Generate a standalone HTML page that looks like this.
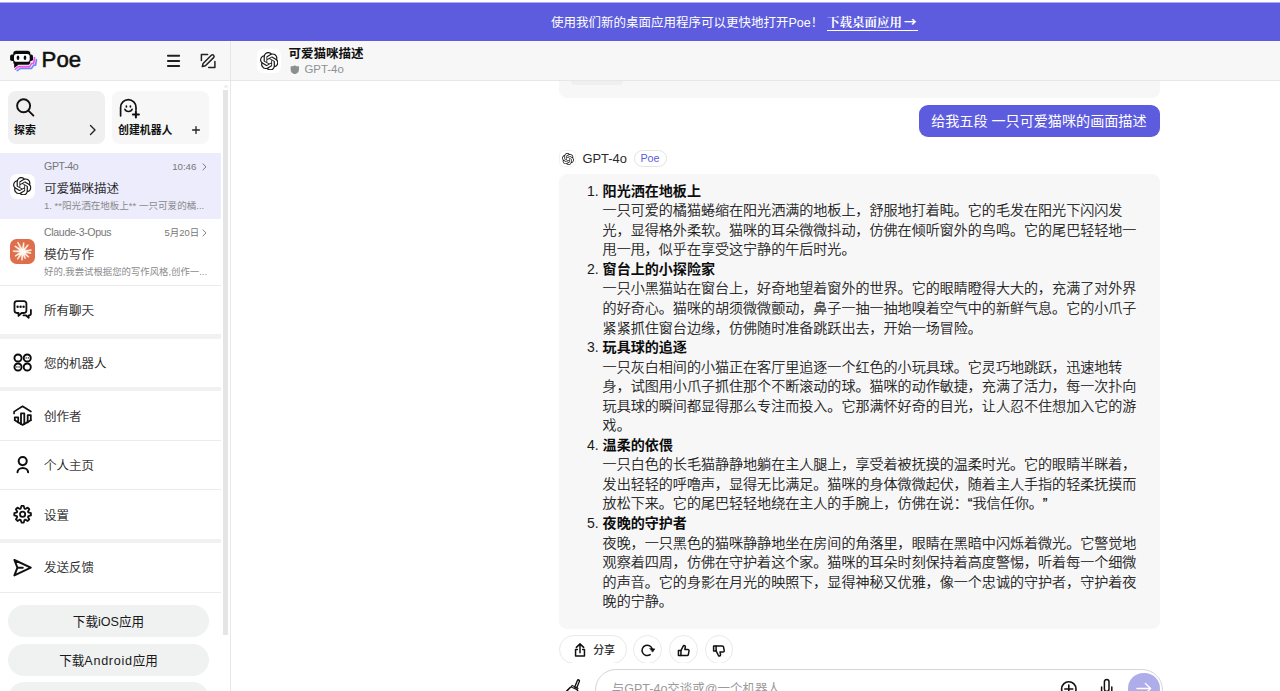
<!DOCTYPE html>
<html lang="zh-CN">
<head>
<meta charset="utf-8">
<title>Poe</title>
<style>
*{box-sizing:border-box;margin:0;padding:0}
html,body{width:1280px;height:691px;overflow:hidden;background:#fff}
body{font-family:"Liberation Sans","Noto Sans CJK SC",sans-serif;color:#141414;position:relative;-webkit-font-smoothing:antialiased}
.abs{position:absolute}
svg{display:block}
/* banner */
#banner{position:absolute;left:0;top:2px;width:1280px;height:40px;background:#5d5cde;border-top:1px solid #aeadee;border-bottom:1px solid #908fe8;color:#fff;font-size:12.5px;line-height:41.5px;white-space:nowrap}
#banner .t1{position:absolute;left:551px;top:-1px;line-height:43.5px}
#banner .t2{position:absolute;left:827px;top:-1px;line-height:40px;font-family:"Liberation Serif","Noto Serif CJK SC",serif;font-weight:700;font-size:12.5px}
#banner .ul{position:absolute;left:827px;top:27px;width:91px;height:1px;background:#fff}
#banner .ar{font-family:"Noto Sans CJK SC",sans-serif;font-weight:700;margin-left:2px}
/* headers */
#shead{position:absolute;left:0;top:41px;width:230px;height:39px;background:#f7f7f7}
#mhead{position:absolute;left:231px;top:41px;width:1049px;height:39px;background:#f7f7f7}
#hline{position:absolute;left:0;top:80px;width:1280px;height:1px;background:#e6e8e8}
#vline{position:absolute;left:230px;top:41px;width:1px;height:650px;background:#e6e8e8}
.poe{position:absolute;left:41.6px;top:6px;font-size:22.2px;line-height:26px;font-weight:400;color:#111;-webkit-text-stroke:0.55px #111;letter-spacing:0}
/* sidebar */
#side{position:absolute;left:0;top:81px;width:230px;height:610px;background:#fff;overflow:hidden}
.card{position:absolute;top:10px;width:97px;height:53px;border-radius:8px}
.card .lbl{position:absolute;left:6px;top:31px;font-size:10.9px;line-height:16px;font-weight:700;color:#111;white-space:nowrap}
.chat{position:absolute;left:0;width:221px;height:66px}
.chat .bot{position:absolute;left:44px;top:7px;letter-spacing:-0.35px;font-size:10.6px;line-height:13px;color:#777}
.chat .time{position:absolute;right:24.6px;top:7px;font-size:9.7px;line-height:13px;color:#777}
.chat .ttl{position:absolute;left:44px;top:27px;font-size:12.5px;line-height:19px;color:#111;white-space:nowrap;font-weight:300;-webkit-text-stroke:0.2px #111}
.chat .pre{position:absolute;left:44px;top:46px;font-size:9.55px;line-height:14px;color:#8a8a8a;white-space:nowrap}
.chat .av{position:absolute;left:10.2px;top:20.8px;width:25px;height:25px;border-radius:6.5px;overflow:hidden}
.nav{position:absolute;left:0;width:221px;height:48px}
.nav .lbl{position:absolute;left:44px;top:15.7px;font-size:12.5px;line-height:18px;color:#111;white-space:nowrap;font-weight:300;-webkit-text-stroke:0.2px #111}
.nav .ic{position:absolute;left:11px;top:13px;width:22px;height:22px}
.band{position:absolute;left:0;width:221px;height:4.7px;background:#f0f1f1}
.thin{position:absolute;left:0;width:221px;height:1px;background:#ececec}
.pill{position:absolute;left:8px;width:201px;height:32.3px;border-radius:17px;background:#f0f1f1;font-size:12.6px;line-height:34.4px;text-align:center;color:#1a1a1a}
#thumb{position:absolute;left:222.8px;top:9px;width:5.6px;height:545px;background:#e3e5e6}
/* main */
#main{position:absolute;left:231px;top:81px;width:1049px;height:610px;background:#fff;overflow:hidden}

#mhead .av{position:absolute;left:25.8px;top:7.7px;width:24.5px;height:24.5px;border-radius:6px;background:#fff}
#mhead .ttl{position:absolute;left:57.5px;top:4.8px;font-size:12.5px;line-height:16px;font-weight:700;color:#111;white-space:nowrap}
#mhead .sub{position:absolute;left:73.5px;top:20.5px;font-size:11.4px;line-height:15px;color:#8b9195;white-space:nowrap}
.prevb{position:absolute;left:328px;top:0;width:601px;height:17px;background:#f7f7f7;border-radius:0 0 8px 8px}
.prevb i{position:absolute;left:12px;top:0;width:52px;height:4px;background:#efefef;border-radius:0 0 4px 4px}
.userb{position:absolute;left:687.6px;top:23.7px;width:241.2px;height:32px;border-radius:9px;background:#5d5cde;color:#fff;font-size:14.1px;line-height:32px;padding-left:12.6px;white-space:nowrap}
.bhead{position:absolute;left:328px;top:69px;height:18px}
.bhead .sav{position:absolute;left:0.9px;top:0.9px;width:15.4px;height:15.4px;border-radius:4px;background:#fff;box-shadow:0 0 0 0.8px #eeefef}
.bhead .nm{position:absolute;left:23.5px;top:0;font-size:12.9px;line-height:17.5px;color:#2a2a2a;white-space:nowrap}
.bhead .tag{position:absolute;left:74.5px;top:0;width:33px;height:16.6px;border:1px solid #e3e3e3;border-radius:8.5px;background:#fff;color:#5d5cde;font-size:10.8px;line-height:14.6px;text-align:center}
.botb{position:absolute;left:328px;top:93.3px;width:601px;height:455.2px;border-radius:8px;background:#f7f7f7}
.botb .txt{position:absolute;left:43.6px;top:7.4px;font-size:14.06px;line-height:19.54px;color:#0d0d0d;white-space:nowrap;font-weight:300;-webkit-text-stroke:0.2px #0d0d0d}
.botb .txt b{font-weight:700;-webkit-text-stroke:0}
.botb .txt .n{position:absolute;left:-18px;width:14px;text-align:right;font-weight:400;-webkit-text-stroke:0;color:#1a1a1a}
.acts{position:absolute;left:0;top:554.2px;width:1049px;height:27.4px;overflow:hidden}
.acts .bt{position:absolute;top:0;height:28.6px;border:1px solid #e6eaea;border-radius:15px;background:#fff}
.acts .bt.c{width:28.6px}
.acts .sh{position:absolute;left:33px;top:6.3px;font-size:10.9px;line-height:16px;font-weight:400;color:#1a1a1a;-webkit-text-stroke:0.2px #1a1a1a}
.inp{position:absolute;left:364.3px;top:587.7px;width:568.2px;height:44px;border:1px solid #d3d6d6;border-radius:21px;background:#fff}
.inp .ph{position:absolute;left:15.5px;top:9px;font-size:12.5px;line-height:20px;color:#9a9a9a;white-space:nowrap}
.send{position:absolute;left:897.2px;top:591.9px;width:31.6px;height:31.6px;border-radius:50%;background:#aeade9}
</style>
</head>
<body>
<svg width="0" height="0" style="position:absolute"><defs><symbol id="oai" viewBox="0 0 24 24"><path fill="#1a1a1a" d="M22.2819 9.8211a5.9847 5.9847 0 0 0-.5157-4.9108 6.0462 6.0462 0 0 0-6.5098-2.9A6.0651 6.0651 0 0 0 4.9807 4.1818a5.9847 5.9847 0 0 0-3.9977 2.9 6.0462 6.0462 0 0 0 .7427 7.0966 5.98 5.98 0 0 0 .511 4.9107 6.051 6.051 0 0 0 6.5146 2.9001A5.9847 5.9847 0 0 0 13.2599 24a6.0557 6.0557 0 0 0 5.7718-4.2058 5.9894 5.9894 0 0 0 3.9977-2.9001 6.0557 6.0557 0 0 0-.7475-7.0729zm-9.022 12.6081a4.4755 4.4755 0 0 1-2.8764-1.0408l.1419-.0804 4.7783-2.7582a.7948.7948 0 0 0 .3927-.6813v-6.7369l2.02 1.1686a.071.071 0 0 1 .038.052v5.5826a4.504 4.504 0 0 1-4.4945 4.4944zm-9.6607-4.1254a4.4708 4.4708 0 0 1-.5346-3.0137l.142.0852 4.783 2.7582a.7712.7712 0 0 0 .7806 0l5.8428-3.3685v2.3324a.0804.0804 0 0 1-.0332.0615L9.74 19.9502a4.4992 4.4992 0 0 1-6.1408-1.6464zM2.3408 7.8956a4.485 4.485 0 0 1 2.3655-1.9728V11.6a.7664.7664 0 0 0 .3879.6765l5.8144 3.3543-2.0201 1.1685a.0757.0757 0 0 1-.071 0l-4.8303-2.7865A4.504 4.504 0 0 1 2.3408 7.872zm16.5963 3.8558L13.1038 8.364 15.1192 7.2a.0757.0757 0 0 1 .071 0l4.8303 2.7913a4.4944 4.4944 0 0 1-.6765 8.1042v-5.6772a.79.79 0 0 0-.407-.667zm2.0107-3.0231l-.142-.0852-4.7735-2.7818a.7759.7759 0 0 0-.7854 0L9.409 9.2297V6.8974a.0662.0662 0 0 1 .0284-.0615l4.8303-2.7866a4.4992 4.4992 0 0 1 6.6802 4.66zM8.3065 12.863l-2.02-1.1638a.0804.0804 0 0 1-.038-.0567V6.0742a4.4992 4.4992 0 0 1 7.3757-3.4537l-.142.0805L8.704 5.459a.7948.7948 0 0 0-.3927.6813zm1.0976-2.3654l2.602-1.4998 2.6069 1.4998v2.9994l-2.5974 1.4997-2.6067-1.4997Z"/></symbol></defs></svg>
<div id="banner">
  <span class="t1">使用我们新的桌面应用程序可以更快地打开Poe！</span>
  <span class="t2">下载桌面应用<span class="ar">→</span></span>
  <span class="ul"></span>
</div>
<div id="shead">
  <svg class="abs" style="left:0;top:0" width="60" height="40" viewBox="0 41 60 40">
    <path d="M17.2 70.6 L20.4 68.4 H31.4 L33.6 65.2 H35.6 L36.4 59.6" fill="none" stroke="#7585ff" stroke-width="1.7" stroke-linejoin="round" stroke-linecap="round"/>
    <path d="M15.4 69.2 L18.7 66.6 H29.6 L31.7 63.4 H33.7 L34.5 57.6" fill="none" stroke="#f253e9" stroke-width="1.7" stroke-linejoin="round" stroke-linecap="round"/>
    <path d="M14.2 63 V67.9 L18.6 64.7 Z" fill="#0b0b0b"/>
    <rect x="10.1" y="54.5" width="22.9" height="6.6" rx="1.8" fill="#0b0b0b"/>
    <rect x="13.3" y="50.8" width="17" height="13.9" rx="2.8" fill="#0b0b0b"/>
    <rect x="14" y="53.9" width="15.7" height="7.9" rx="2.6" fill="#fff"/>
    <ellipse cx="18" cy="57.8" rx="1.35" ry="2.3" fill="#0b0b0b"/>
    <ellipse cx="25" cy="57.8" rx="1.35" ry="2.3" fill="#0b0b0b"/>
  </svg>
  <div class="poe">Poe</div>
  <svg class="abs" style="left:155px;top:0" width="75" height="40" viewBox="155 41 75 40" fill="none" stroke="#222" stroke-width="1.9" stroke-linecap="round" stroke-linejoin="round">
    <path d="M167.9 55.8 H179.2 M167.9 61 H179.2 M167.9 66 H179.2"/>
    <g stroke-width="1.5">
      <path d="M207.6 54.4 H201.4 V60.6"/>
      <path d="M214.9 61.4 V67.6 H208.7"/>
      <path d="M211.3 55.3 a1.6 1.6 0 0 1 2.3 2.3 L205.4 65.8 L202.3 66.6 L203.1 63.5 Z"/>
    </g>
  </svg>
</div>
<div id="mhead">
  <div class="av"><svg class="abs" style="left:3px;top:3px" width="18.5" height="18.5"><use href="#oai"/></svg></div>
  <div class="ttl">可爱猫咪描述</div>
  <svg class="abs" style="left:59px;top:24px" width="9.6" height="9.4" viewBox="0 0 10 10"><path d="M5 0.2 L6.6 1.2 L9.4 1.2 V5 C9.4 7.6 7.4 9.2 5 9.9 C2.6 9.2 0.6 7.6 0.6 5 V1.2 L3.4 1.2 Z" fill="#8a8f8f"/></svg>
  <div class="sub">GPT-4o</div>
</div>
<div id="side">
  <!-- cards -->
  <div class="card" style="left:8px;background:#f0f0f0">
    <svg class="abs" style="left:8px;top:7px" width="19" height="19" viewBox="0 0 19 19" fill="none" stroke="#111" stroke-width="1.9" stroke-linecap="round"><circle cx="7.6" cy="7.8" r="6.5"/><path d="M12.4 12.6 L17.4 17.6"/></svg>
    <div class="lbl">探索</div>
    <svg class="abs" style="left:81px;top:33px" width="8" height="12" viewBox="0 0 8 12" fill="none" stroke="#222" stroke-width="1.4" stroke-linecap="round" stroke-linejoin="round"><path d="M1.5 1.5 L6 6 L1.5 10.5"/></svg>
  </div>
  <div class="card" style="left:112px;background:#f7f7f7">
    <svg class="abs" style="left:7px;top:6px" width="22" height="22" viewBox="0 0 22 22" fill="none" stroke="#111" stroke-width="1.5" stroke-linecap="round" stroke-linejoin="round">
      <path d="M1.6 18.8 V10.4 a7.7 7.7 0 0 1 15.4 0 V13" stroke-width="1.7"/>
      <path d="M5.9 12.2 a3.7 2.9 0 0 0 7.2 0" stroke-width="1.5"/>
      <path d="M7.4 9 V9.8 M11.4 9 V9.8" stroke-width="1.7"/>
      <path d="M16.9 14.6 V20.6 M13.9 17.6 H19.9" stroke-width="2"/>
    </svg>
    <div class="lbl">创建机器人</div>
    <svg class="abs" style="left:79px;top:34px" width="10" height="10" viewBox="0 0 10 10" fill="none" stroke="#222" stroke-width="1.3" stroke-linecap="round"><path d="M5 1.6 V8.4 M1.6 5 H8.4"/></svg>
  </div>
  <!-- chats -->
  <div class="chat" style="top:72px;background:#ececfc">
    <div class="av" style="background:#fff"><svg class="abs" style="left:3px;top:3px" width="18.5" height="18.5"><use href="#oai"/></svg></div>
    <div class="bot">GPT-4o</div>
    <div class="time">10:46</div>
    <svg class="abs chev" style="left:201.7px;top:9.8px" width="5.3" height="7.8" viewBox="0 0 6 9" fill="none" stroke="#777" stroke-width="1.1" stroke-linecap="round" stroke-linejoin="round"><path d="M1 1 L4.6 4.5 L1 8"/></svg>
    <div class="ttl">可爱猫咪描述</div>
    <div class="pre">1. **阳光洒在地板上** 一只可爱的橘...</div>
  </div>
  <div class="chat" style="top:138px">
    <div class="av" style="background:#de6f4a;top:20px">
      <svg class="abs" style="left:0;top:0" width="25" height="25" viewBox="-12.7 -12.6 25 25"><path d="M0.84 -0.44 L-4.55 -9.61 L-5.35 -9.19 L-0.84 0.44Z M0.94 0.11 L1.49 -8.81 L0.59 -8.91 L-0.94 -0.11Z M0.74 0.60 L5.82 -6.49 L5.12 -7.05 L-0.74 -0.60Z M0.17 0.93 L8.68 -1.12 L8.52 -2.00 L-0.17 -0.93Z M-0.17 0.93 L8.26 2.00 L8.42 1.12 L0.17 -0.93Z M-0.64 0.70 L5.70 5.80 L6.30 5.14 L0.64 -0.70Z M-0.89 0.33 L2.18 7.19 L3.02 6.87 L0.89 -0.33Z M-0.95 -0.09 L-1.23 8.56 L-0.33 8.64 L0.95 0.09Z M-0.78 -0.54 L-5.57 7.30 L-4.83 7.82 L0.78 0.54Z M-0.48 -0.82 L-7.79 4.04 L-7.33 4.82 L0.48 0.82Z M0.05 -0.95 L-9.62 -0.97 L-9.66 -0.07 L-0.05 0.95Z M0.55 -0.78 L-7.54 -5.84 L-8.06 -5.10 L-0.55 0.78Z" fill="#fff3e8" stroke="#fff3e8" stroke-width="0.5" stroke-linejoin="round"/><circle r="2.7" cx="0.2" cy="0.2" fill="#fffaf4"/></svg>
    </div>
    <div class="bot">Claude-3-Opus</div>
    <div class="time" style="right:21.9px;font-size:9.45px">5月20日</div>
    <svg class="abs chev" style="left:201.7px;top:9.8px" width="5.3" height="7.8" viewBox="0 0 6 9" fill="none" stroke="#777" stroke-width="1.1" stroke-linecap="round" stroke-linejoin="round"><path d="M1 1 L4.6 4.5 L1 8"/></svg>
    <div class="ttl">模仿写作</div>
    <div class="pre" style="font-size:9.4px">好的,我尝试根据您的写作风格,创作一...</div>
  </div>
  <div class="thin" style="top:204px"></div>
  <!-- nav -->
  <div class="nav" style="top:205px">
    <svg class="ic" viewBox="0 0 22 22" fill="none" stroke="#111" stroke-width="1.8" stroke-linecap="round" stroke-linejoin="round">
      <path d="M5.9 2.1 H13 a2.4 2.4 0 0 1 2.4 2.4 V11.6 a2.4 2.4 0 0 1 -2.4 2.4 H10.6 L7.5 16.9 V14 H5.9 a2.4 2.4 0 0 1 -2.4 -2.4 V4.5 a2.4 2.4 0 0 1 2.4 -2.4 Z"/>
      <path d="M19.9 11 V14.5 a1.8 1.8 0 0 1 -1.8 1.8 H17.7 V18.8 L14.8 16.3 H12.4"/>
      <g fill="#111" stroke="none"><circle cx="6.6" cy="7.8" r="1.2"/><circle cx="9.6" cy="7.8" r="1.2"/><circle cx="12.6" cy="7.8" r="1.2"/></g>
    </svg>
    <div class="lbl">所有聊天</div>
  </div>
  <div class="band" style="top:253.2px"></div>
  <div class="nav" style="top:258px">
    <svg class="ic" viewBox="0 0 22 22" fill="none" stroke="#0a0a0a" stroke-width="1.9">
      <circle cx="7" cy="6" r="3.55"/><circle cx="16.25" cy="6" r="3.55"/><circle cx="7" cy="15" r="3.55"/><circle cx="16.25" cy="15" r="3.55"/>
      <path d="M15.1 5.9 H15.2 M17.3 5.9 H17.4 M5.85 14.9 H5.95 M8.05 14.9 H8.15" stroke-width="1.4" stroke-linecap="round"/>
    </svg>
    <div class="lbl">您的机器人</div>
  </div>
  <div class="band" style="top:305.8px"></div>
  <div class="nav" style="top:311px">
    <svg class="ic" viewBox="0 0 22 22" fill="none" stroke="#111" stroke-width="1.6" stroke-linejoin="round" stroke-linecap="round">
      <path d="M3.1 8.4 V6.6 L11.55 1.3 L19.9 6.5" stroke-width="1.7"/>
      <path d="M3.8 15.2 V12.3 H7.2 V17.4" stroke-width="1.8"/>
      <path d="M10 19.2 V8.3 H13.3 V19.2" stroke-width="1.8"/>
      <path d="M16.7 17.4 V10.2 H19.8 V15.2" stroke-width="1.8"/>
      <path d="M3.8 15.2 L11.65 19.9 L19.8 15.2" stroke-width="1.8"/>
    </svg>
    <div class="lbl">创作者</div>
  </div>
  <div class="thin" style="top:359px"></div>
  <div class="nav" style="top:360px">
    <svg class="ic" viewBox="0 0 22 22" fill="none" stroke="#0d0d0d" stroke-width="2" stroke-linecap="round">
      <circle cx="11.7" cy="7.1" r="4.05"/>
      <path d="M6.5 18.3 a5.3 4.4 0 0 1 10.6 0"/>
    </svg>
    <div class="lbl">个人主页</div>
  </div>
  <div class="thin" style="top:408.1px"></div>
  <div class="nav" style="top:409.5px">
    <svg class="ic" style="top:12.1px" viewBox="0 0 22 22" fill="none" stroke="#111" stroke-width="1.8" stroke-linejoin="round">
      <circle cx="11.6" cy="11.3" r="2.6"/>
      <path d="M10.48 2.97 L12.72 2.97 L13.45 5.59 L14.32 5.95 L16.70 4.62 L18.28 6.20 L16.95 8.58 L17.31 9.45 L19.93 10.18 L19.93 12.42 L17.31 13.15 L16.95 14.02 L18.28 16.40 L16.70 17.98 L14.32 16.65 L13.45 17.01 L12.72 19.63 L10.48 19.63 L9.75 17.01 L8.88 16.65 L6.50 17.98 L4.92 16.40 L6.25 14.02 L5.89 13.15 L3.27 12.42 L3.27 10.18 L5.89 9.45 L6.25 8.58 L4.92 6.20 L6.50 4.62 L8.88 5.95 L9.75 5.59 Z"/>
    </svg>
    <div class="lbl" style="top:16.6px">设置</div>
  </div>
  <div class="band" style="top:457.6px"></div>
  <div class="nav" style="top:462.5px">
    <svg class="ic" viewBox="0 0 22 22" fill="none" stroke="#111" stroke-width="1.95" stroke-linejoin="round" stroke-linecap="round">
      <path d="M3.4 3 L19.8 10.7 L3.4 18.4 L6.4 10.7 Z M6.4 10.7 H11.8"/>
    </svg>
    <div class="lbl">发送反馈</div>
  </div>
  <div class="thin" style="top:511px"></div>
  <div class="pill" style="top:523.8px">下载iOS应用</div>
  <div class="pill" style="top:562.8px">下载<span style="letter-spacing:0.7px">Android</span>应用</div>
  <div class="pill" style="top:601.4px"></div>
  <div id="thumb"></div>
  <svg class="abs" style="left:223px;top:3px" width="6" height="4" viewBox="0 0 6 4"><path d="M0.5 3.5 L3 0.5 L5.5 3.5 Z" fill="#e9eaea"/></svg>
</div>
<div id="main">
  <div class="prevb"><i></i></div>
  <div class="userb">给我五段 一只可爱猫咪的画面描述</div>
  <div class="bhead">
    <div class="sav"><svg class="abs" style="left:1.7px;top:1.7px" width="12" height="12"><use href="#oai"/></svg></div>
    <div class="nm">GPT-4o</div>
    <div class="tag">Poe</div>
  </div>
  <div class="botb">
    <div class="txt">
      <div><span class="n">1.</span><b>阳光洒在地板上</b></div>
      <div>一只可爱的橘猫蜷缩在阳光洒满的地板上，舒服地打着盹。它的毛发在阳光下闪闪发</div>
      <div>光，显得格外柔软。猫咪的耳朵微微抖动，仿佛在倾听窗外的鸟鸣。它的尾巴轻轻地一</div>
      <div>甩一甩，似乎在享受这宁静的午后时光。</div>
      <div><span class="n">2.</span><b>窗台上的小探险家</b></div>
      <div>一只小黑猫站在窗台上，好奇地望着窗外的世界。它的眼睛瞪得大大的，充满了对外界</div>
      <div>的好奇心。猫咪的胡须微微颤动，鼻子一抽一抽地嗅着空气中的新鲜气息。它的小爪子</div>
      <div>紧紧抓住窗台边缘，仿佛随时准备跳跃出去，开始一场冒险。</div>
      <div><span class="n">3.</span><b>玩具球的追逐</b></div>
      <div>一只灰白相间的小猫正在客厅里追逐一个红色的小玩具球。它灵巧地跳跃，迅速地转</div>
      <div>身，试图用小爪子抓住那个不断滚动的球。猫咪的动作敏捷，充满了活力，每一次扑向</div>
      <div>玩具球的瞬间都显得那么专注而投入。它那满怀好奇的目光，让人忍不住想加入它的游</div>
      <div>戏。</div>
      <div><span class="n">4.</span><b>温柔的依偎</b></div>
      <div>一只白色的长毛猫静静地躺在主人腿上，享受着被抚摸的温柔时光。它的眼睛半眯着，</div>
      <div>发出轻轻的呼噜声，显得无比满足。猫咪的身体微微起伏，随着主人手指的轻柔抚摸而</div>
      <div>放松下来。它的尾巴轻轻地绕在主人的手腕上，仿佛在说：“我信任你。<span style="margin-left:7px">”</span></div>
      <div><span class="n">5.</span><b>夜晚的守护者</b></div>
      <div>夜晚，一只黑色的猫咪静静地坐在房间的角落里，眼睛在黑暗中闪烁着微光。它警觉地</div>
      <div>观察着四周，仿佛在守护着这个家。猫咪的耳朵时刻保持着高度警惕，听着每一个细微</div>
      <div>的声音。它的身影在月光的映照下，显得神秘又优雅，像一个忠诚的守护者，守护着夜</div>
      <div>晚的宁静。</div>
    </div>
  </div>
  <div class="acts">
    <div class="bt" style="left:328.2px;width:67.6px"><div class="sh">分享</div></div>
    <div class="bt c" style="left:402.4px"></div>
    <div class="bt c" style="left:438px"></div>
    <div class="bt c" style="left:473.6px"></div>
    <svg class="abs" style="left:0;top:0" width="1049" height="27.4" viewBox="231 635.2 1049 27.4" fill="none" stroke="#111" stroke-width="1.5" stroke-linecap="round" stroke-linejoin="round">
      <path d="M577.3 649.6 H575.5 V656.3 H584.4 V649.6 H582.6"/><path d="M579.95 653 V644.4 M576.3 647.6 L579.95 644.1 L583.6 647.6"/>
      <path d="M650.18 654.86 A5.2 5.2 0 1 1 652.29 649.52"/><path d="M649.90 648.60 L654.80 649.10 L652.70 652.10 Z" fill="#111" stroke-width="0.6"/>
      <path d="M678.4 650.7 H680.9 V655.8 H678.4 Z"/><path d="M680.9 650.9 L683.5 645.7 C684.8 645.5 685.6 646.3 685.3 647.5 L684.8 649.7 H687.9 C688.7 649.7 689.1 650.3 689 651 L688.3 654.8 C688.2 655.4 687.7 655.8 687.1 655.8 H680.9"/>
      <g transform="translate(35.2 1301.9) scale(1 -1)"><path d="M678.4 650.7 H680.9 V655.8 H678.4 Z"/><path d="M680.9 650.9 L683.5 645.7 C684.8 645.5 685.6 646.3 685.3 647.5 L684.8 649.7 H687.9 C688.7 649.7 689.1 650.3 689 651 L688.3 654.8 C688.2 655.4 687.7 655.8 687.1 655.8 H680.9"/></g>
    </svg>
  </div>
  <svg class="abs" style="left:325px;top:590px" width="40" height="20" viewBox="556 671 40 20" fill="none" stroke-linecap="round" stroke-linejoin="round">
    <path d="M570.4 687.3 L566.2 691.6 M577.6 690.6 L577 692" stroke="#111" stroke-width="1.6"/>
    <path d="M571.2 686 L578 689.2" stroke="#111" stroke-width="2.9" stroke-linecap="butt"/>
    <path d="M572 686.4 L577.2 688.8" stroke="#fff" stroke-width="0.7" stroke-linecap="butt"/>
    <path d="M578.4 680.9 L575.9 687" stroke="#111" stroke-width="3.5"/>
    <path d="M578.3 681.2 L576.2 686.4" stroke="#fff" stroke-width="0.9"/>
  </svg>
  <div class="inp"><div class="ph">与GPT-4o交谈或@一个机器人</div></div>
  <svg class="abs" style="left:829px;top:599px" width="18" height="12" viewBox="0 0 18 12" fill="none" stroke="#111" stroke-width="1.6" stroke-linecap="round"><circle cx="8.8" cy="9" r="7.2"/><path d="M8.8 5 V13 M4.8 9 H12.8"/></svg>
  <svg class="abs" style="left:868px;top:597px" width="16" height="14" viewBox="0 0 16 14" fill="none" stroke="#111" stroke-width="1.5" stroke-linecap="round"><rect x="5.4" y="1.4" width="4.6" height="12" rx="2.3"/><path d="M2.6 9 V13 M12.8 9 V13"/></svg>
  <div class="send"><svg class="abs" style="left:8px;top:8px" width="16" height="16" viewBox="0 0 16 16" fill="none" stroke="#fff" stroke-width="1.4" stroke-linecap="round" stroke-linejoin="round"><path d="M1 7.5 H14.6 M9.4 2.4 L14.6 7.5 L9.4 12.6"/></svg></div>
</div>
<div id="hline"></div>
<div id="vline"></div>
</body>
</html>
